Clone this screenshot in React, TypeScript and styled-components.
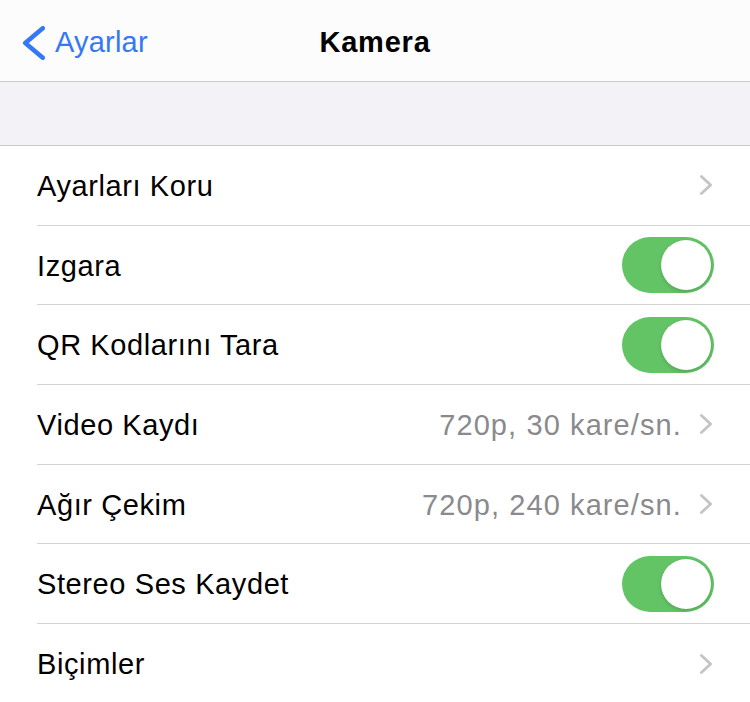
import React from "react";
import styled, { createGlobalStyle } from "styled-components";

const GlobalStyle = createGlobalStyle`
  html, body {
    margin: 0;
    padding: 0;
    background: #ffffff;
    font-family: "Liberation Sans", Arial, sans-serif;
    -webkit-font-smoothing: antialiased;
  }
`;

// ─── Navigation bar ──────────────────────────────────────────────────────────

const Page = styled.div`
  width: 750px;
  height: 702px;
  overflow: hidden;
  background: #ffffff;
`;

const NavBar = styled.header`
  height: 82px;
  display: grid;
  grid-template-columns: 1fr auto 1fr;
  align-items: center;
  background: #fcfcfc;
  border-bottom: 1.5px solid #c9c9cc;
  box-sizing: border-box;
`;

const BackButton = styled.button`
  justify-self: start;
  display: flex;
  align-items: center;
  gap: 9px;
  padding: 0 0 0 22px;
  margin-top: 4px;
  border: none;
  background: none;
  color: #3478f6;
  font-family: inherit;
  font-size: 29px;
  letter-spacing: 0.2px;
  cursor: pointer;
`;

const Title = styled.h1`
  margin: 4px 0 0;
  font-size: 29px;
  font-weight: 700;
  letter-spacing: 0.8px;
  color: #000;
`;

const SectionGap = styled.div`
  height: 63px;
  background: #f2f2f7;
  border-bottom: 1.5px solid #c9c9cc;
`;

// ─── Rows ────────────────────────────────────────────────────────────────────

const List = styled.ul`
  list-style: none;
  margin: 0;
  padding: 0 0 0 37px;
`;

const Row = styled.li`
  height: 79.7px;
  display: flex;
  align-items: center;
  padding-right: 37px;
  box-sizing: border-box;
  border-bottom: 1.5px solid #d3d3d6;

  &:last-child {
    border-bottom: none;
  }
`;

const Label = styled.span`
  flex: 1;
  font-size: 29px;
  letter-spacing: 0.6px;
  color: #000;
  padding-top: 2px;
`;

const Value = styled.span`
  font-size: 29px;
  letter-spacing: 1.1px;
  color: #8a8a8e;
  margin-right: 17px;
  padding-top: 2px;
`;

const Switch = styled.div<{ $on: boolean }>`
  position: relative;
  width: 92px;
  height: 56px;
  border-radius: 28px;
  margin-right: -1px;
  background: ${({ $on }) => ($on ? "#63c466" : "#e9e9eb")};
`;

const Knob = styled.span<{ $on: boolean }>`
  position: absolute;
  top: 3px;
  left: ${({ $on }) => ($on ? "39px" : "3px")};
  width: 50px;
  height: 50px;
  border-radius: 50%;
  background: #fff;
  box-shadow: 0 2px 4px rgba(0, 0, 0, 0.14), 0 0 1px rgba(0, 0, 0, 0.1);
`;

function Chevron({ color, w, h, stroke }: { color: string; w: number; h: number; stroke: number }) {
  return (
    <svg width={w} height={h} viewBox={`0 0 ${w} ${h}`} fill="none">
      <path
        d={`M${stroke / 2 + 1} ${stroke / 2 + 1} L${w - stroke / 2 - 1} ${h / 2} L${stroke / 2 + 1} ${h - stroke / 2 - 1}`}
        stroke={color}
        strokeWidth={stroke}
        strokeLinecap="round"
        strokeLinejoin="round"
      />
    </svg>
  );
}

const BackChevron = styled.span`
  display: flex;
  transform: scaleX(-1);
`;

type Item =
  | { label: string; kind: "link"; value?: string }
  | { label: string; kind: "switch"; on: boolean };

const items: Item[] = [
  { label: "Ayarları Koru", kind: "link" },
  { label: "Izgara", kind: "switch", on: true },
  { label: "QR Kodlarını Tara", kind: "switch", on: true },
  { label: "Video Kaydı", kind: "link", value: "720p, 30 kare/sn." },
  { label: "Ağır Çekim", kind: "link", value: "720p, 240 kare/sn." },
  { label: "Stereo Ses Kaydet", kind: "switch", on: true },
  { label: "Biçimler", kind: "link" },
];

export default function App(): React.ReactElement {
  return (
    <Page>
      <GlobalStyle />
      <NavBar>
        <BackButton>
          <BackChevron>
            <Chevron color="#3478f6" w={24} h={36} stroke={4.5} />
          </BackChevron>
          Ayarlar
        </BackButton>
        <Title>Kamera</Title>
        <span />
      </NavBar>
      <SectionGap />
      <List>
        {items.map((item) => (
          <Row key={item.label}>
            <Label>{item.label}</Label>
            {item.kind === "link" ? (
              <>
                {item.value && <Value>{item.value}</Value>}
                <Chevron color="#c4c4c7" w={14} h={22} stroke={2.8} />
              </>
            ) : (
              <Switch $on={item.on}>
                <Knob $on={item.on} />
              </Switch>
            )}
          </Row>
        ))}
      </List>
    </Page>
  );
}
